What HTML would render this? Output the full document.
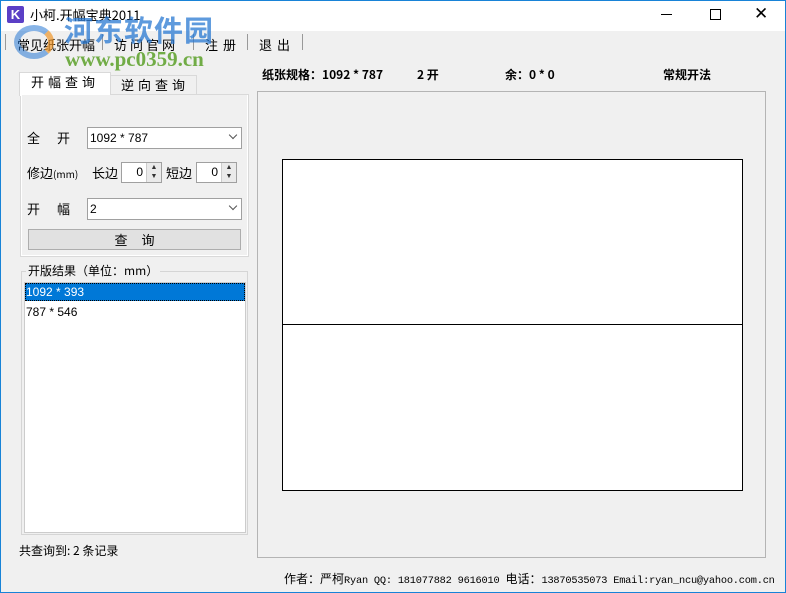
<!DOCTYPE html>
<html><head><meta charset="utf-8"><style>
*{margin:0;padding:0;box-sizing:border-box}
body{width:786px;height:593px;background:#f0f0f0;font-family:"Liberation Sans","Noto Sans CJK SC",sans-serif;font-size:12px;color:#000;position:relative;overflow:hidden}
.a{position:absolute}
.cb{position:absolute;background:#fff;border:1px solid #a0a0a0;font-size:12px;padding:3px 0 0 2px}
.chev{position:absolute;right:5px;top:4px;width:6px;height:6px;border-right:1px solid #555;border-bottom:1px solid #555;transform:rotate(45deg)}
.sp{position:absolute;background:#fff;border:1px solid #a0a0a0;text-align:right;padding:2px 18px 0 0}
.sp i{position:absolute;right:0;top:0;width:15px;height:19px;border-left:1px solid #ccc;background:#eaeaea;font-style:normal;font-size:7px;line-height:9px;text-align:center;color:#333}
.cn{font-family:"Noto Sans CJK SC",sans-serif}
.mono{font-family:"Liberation Mono","Noto Sans CJK SC",monospace}
</style></head><body>
<div class="a" style="left:0;top:0;width:786px;height:31px;background:#fff"></div>
<div class="a" style="left:7px;top:6px;width:17px;height:17px;background:#5b3fc6;border-radius:2px;color:#fff;font-weight:bold;font-size:13px;text-align:center;line-height:17px">K</div>
<div class="a cn" style="left:30px;top:5px;font-size:13px">小柯.开幅宝典2011</div>
<div class="a" style="left:661px;top:14px;width:11px;height:1px;background:#000"></div>
<div class="a" style="left:710px;top:9px;width:11px;height:11px;border:1px solid #000"></div>
<div class="a" style="left:754px;top:4px;font-size:17px;line-height:20px">✕</div>
<div class="a cn" style="left:17px;top:35px;font-size:13px">常见纸张开幅</div>
<div class="a" style="left:5px;top:34px;width:1px;height:16px;background:#999"></div>
<div class="a" style="left:102px;top:34px;width:1px;height:16px;background:#999"></div>
<div class="a cn" style="left:114px;top:35px;font-size:13px;letter-spacing:3px">访问官网</div>
<div class="a" style="left:193px;top:34px;width:1px;height:16px;background:#999"></div>
<div class="a cn" style="left:205px;top:35px;font-size:13px;letter-spacing:5px">注册</div>
<div class="a" style="left:247px;top:34px;width:1px;height:16px;background:#999"></div>
<div class="a cn" style="left:259px;top:35px;font-size:13px;letter-spacing:5px">退出</div>
<div class="a" style="left:302px;top:34px;width:1px;height:16px;background:#999"></div>
<div class="a cn" style="left:64px;top:8px;font-size:29px;font-weight:bold;color:rgba(40,120,210,.75);letter-spacing:1px">河东软件园</div>
<div class="a" style="left:14px;top:25px;width:40px;height:34px;border-radius:50%;border:6px solid rgba(40,120,210,.55);border-right-color:rgba(240,150,40,.7)"></div>
<div class="a" style="left:65px;top:47px;font-family:'Liberation Serif',serif;font-size:21px;font-weight:bold;color:rgba(90,160,40,.85)">www.pc0359.cn</div>
<!-- tabs -->
<div class="a" style="left:20px;top:94px;width:229px;height:163px;border:1px solid #d9d9d9;background:#f0f0f0"></div>
<div class="a" style="left:110px;top:75px;width:87px;height:19px;border:1px solid #d9d9d9;border-bottom:none;background:#f0f0f0"></div>
<div class="a cn" style="left:121px;top:75px;font-size:13px;letter-spacing:4px">逆向查询</div>
<div class="a" style="left:19px;top:72px;width:92px;height:24px;border:1px solid #d9d9d9;border-bottom:none;background:#fff"></div>
<div class="a cn" style="left:31px;top:72px;font-size:13px;letter-spacing:4px">开幅查询</div>
<div class="a" style="left:21px;top:95px;width:227px;height:161px;background:#f0f0f0;border:1px solid #fff;border-top:none"></div>
<div class="a cn" style="left:27px;top:128px;font-size:13px;letter-spacing:17px">全开</div>
<div class="cb" style="left:87px;top:127px;width:155px;height:22px">1092 * 787<span class="chev"></span></div>
<div class="a cn" style="left:27px;top:163px;font-size:13px">修边<span style="font-size:10px">(mm)</span></div>
<div class="a cn" style="left:92px;top:163px;font-size:13px">长边</div>
<div class="sp" style="left:121px;top:162px;width:41px;height:21px">0<i>▲<br>▼</i></div>
<div class="a cn" style="left:166px;top:163px;font-size:13px">短边</div>
<div class="sp" style="left:196px;top:162px;width:41px;height:21px">0<i>▲<br>▼</i></div>
<div class="a cn" style="left:27px;top:199px;font-size:13px;letter-spacing:17px">开幅</div>
<div class="cb" style="left:87px;top:198px;width:155px;height:22px">2<span class="chev"></span></div>
<div class="a cn" style="left:28px;top:229px;width:213px;height:21px;border:1px solid #adadad;background:#e1e1e1;text-align:center;font-size:13px;line-height:19px;letter-spacing:14px;padding-left:14px">查询</div>
<!-- group -->
<div class="a" style="left:21px;top:271px;width:227px;height:264px;border:1px solid #d5d5d5"></div>
<div class="a cn" style="left:26px;top:262px;font-size:12px;background:#f0f0f0;padding:0 2px">开版结果（单位：mm）</div>
<div class="a" style="left:24px;top:282px;width:222px;height:251px;background:#fff;border:1px solid #ccc"></div>
<div class="a" style="left:25px;top:283px;width:220px;height:18px;background:#0078d7;color:#fff;padding:2px 1px;outline:1px dotted #000;outline-offset:-1px">1092 * 393</div>
<div class="a" style="left:26px;top:305px">787 * 546</div>
<div class="a cn" style="left:19px;top:542px;font-size:12px">共查询到: 2 条记录</div>
<!-- right -->
<div class="a cn" style="left:262px;top:66px;font-size:12px;font-weight:bold">纸张规格：1092 * 787</div>
<div class="a cn" style="left:417px;top:66px;font-size:12px;font-weight:bold">2 开</div>
<div class="a cn" style="left:505px;top:66px;font-size:12px;font-weight:bold">余：0 * 0</div>
<div class="a cn" style="left:663px;top:66px;font-size:12px;font-weight:bold">常规开法</div>
<div class="a" style="left:257px;top:91px;width:509px;height:467px;border:1px solid #b4b4b4"></div>
<div class="a" style="left:282px;top:159px;width:461px;height:332px;border:1px solid #000;background:#fff"></div>
<div class="a" style="left:282px;top:324px;width:461px;height:1px;background:#000"></div>
<div class="a mono" style="left:284px;top:570px;font-size:10.3px;white-space:nowrap;letter-spacing:-0.2px"><span class="cn" style="font-size:12px;letter-spacing:0">作者：严柯</span>Ryan QQ: 181077882 9616010 <span class="cn" style="font-size:12px;letter-spacing:0">电话：</span>13870535073 Email:ryan_ncu@yahoo.com.cn</div>
<div class="a" style="left:0;top:0;width:786px;height:593px;border:1px solid #1883d7"></div>
</body></html>
